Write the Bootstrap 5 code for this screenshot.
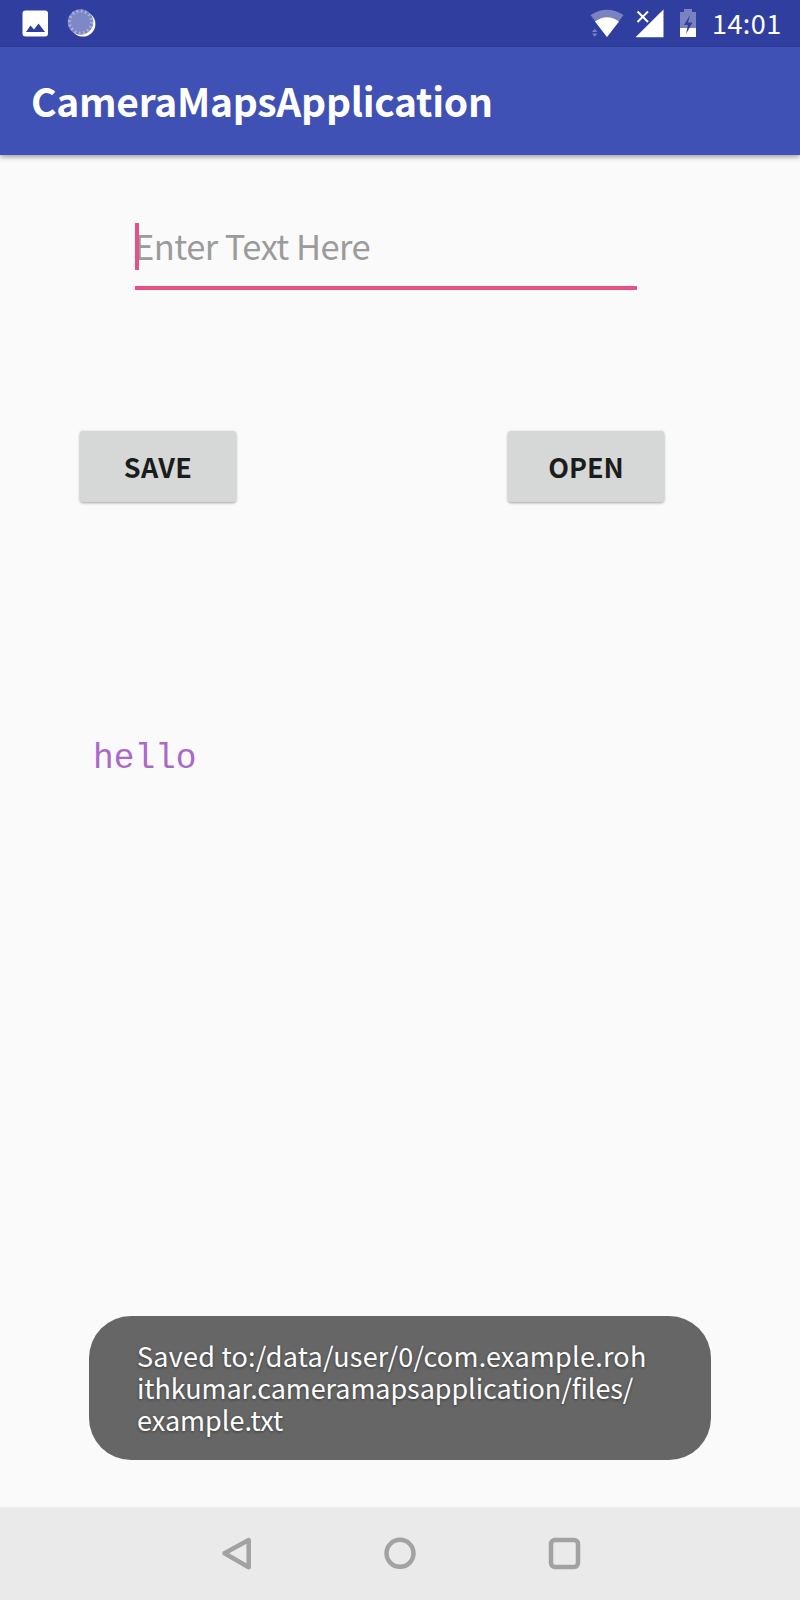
<!DOCTYPE html>
<html lang="en">
<head>
<meta charset="utf-8">
<meta name="viewport" content="width=device-width, initial-scale=1">
<title>CameraMapsApplication</title>
<link rel="stylesheet" href="https://cdn.jsdelivr.net/npm/bootstrap@5.3.0/dist/css/bootstrap.min.css">
<style>
  body { background: #fafafa; font-family: "Noto Sans CJK SC", "Noto Sans", sans-serif; }
  .screen { width: 800px; height: 1600px; }
  .status-bar { height: 47px; background: #303f9f; }
  .status-bar svg { display: block; }
  .clock { width: 88px; font-size: 27px; line-height: 45px; letter-spacing: .45px; }
  .app-bar { height: 108px; padding: 0 31px 2px; background: #3f51b5; box-shadow: 0 2px 5px rgba(0,0,0,.38); z-index: 1; }
  .app-title { font-size: 39px; line-height: 52px; font-weight: 700; letter-spacing: -.29px; }
  .text-field { width: 502px; height: 67px; margin: 68px 0 0 135px; border-bottom: 4px solid #e84f86; }
  .hint { font-size: 34.5px; line-height: 45px; letter-spacing: -.55px; margin-left: -1px; color: #9b9b9b; }
  .caret { width: 4px; height: 47px; left: 0; top: 0; background: #e84f86; }
  .actions { margin: 141px 0 0 80px; width: 584px; }
  .app-btn { --bs-btn-padding-x: 0; --bs-btn-padding-y: 0; --bs-btn-border-width: 0; --bs-btn-border-radius: 3px; --bs-btn-bg: #d6d8d7; --bs-btn-color: #1b1c1c;
    width: 156px; height: 71px; font-size: 27px; line-height: 71px; font-weight: 700; box-shadow: 0 1px 3px rgba(0,0,0,.36); }
  .btn-save { letter-spacing: .4px; }
  .output { font-family: "Liberation Mono", monospace; font-size: 34.5px; line-height: 46px; color: #ab68c8; margin: 234px 0 0 93px; }
  .message { width: 622px; height: 144px; border-radius: 42px; background: #666; color: #fff; padding: 24px 48px; font-size: 27px; line-height: 32px; text-shadow: 0 1px 3px rgba(0,0,0,.45); margin-bottom: 47px; }
  .line-a { letter-spacing: .24px; }
  .line-b { letter-spacing: -.08px; font-variant-ligatures: common-ligatures; }
  .nav-keys { height: 93px; background: #eaeaea; }
</style>
</head>
<body>
<div class="screen d-flex flex-column overflow-hidden">
  <header class="status-bar d-flex text-white">
    <svg width="120" height="47" viewBox="0 0 120 47">
      <rect x="22.5" y="10.500" width="25.5" height="26" rx="3" fill="#fff"/>
      <path d="M26 32l4.500-6.500 3.500 4 4.500-6L45 32z" fill="#303f9f"/>
      <circle cx="82.800" cy="24" r="12.600" fill="#fff"/>
      <circle cx="80.500" cy="22" r="12.800" fill="#7e88c6"/>
      <circle cx="80.500" cy="22" r="11" fill="none" stroke="#aeb5dc" stroke-width="3" stroke-dasharray="1.500 2.820"/>
    </svg>
    <div class="ms-auto d-flex">
      <svg width="142" height="47" viewBox="570 0 142 47">
        <path d="M590.500 15Q607 4.500 623.500 15L607 37z" fill="#7983c1"/>
        <path d="M595 21.500Q607 13 619 21.500L607 37z" fill="#fff"/>
        <path d="M592 32l2.700-3.200 2.700 3.200zM592 33.500l2.700 3.200 2.700-3.200z" fill="#7983c1"/>
        <path d="M663.500 9.500V37.300H635.500z" fill="#fff"/>
        <path d="M637.500 11.500l10.500 10.500M648 11.500L637.500 22" stroke="#fff" stroke-width="2"/>
        <path d="M684 9h8v3h4v16h-16V12h4z" fill="#7983c1"/>
        <path d="M680 28h16v9h-16z" fill="#fff"/>
        <path d="M690 15l-6 10h4l-2 9 6.500-11.500H688z" fill="#303f9f"/>
      </svg>
      <span class="clock">14:01</span>
    </div>
  </header>
  <nav class="app-bar navbar position-relative flex-shrink-0">
    <span class="app-title text-white">CameraMapsApplication</span>
  </nav>
  <main class="flex-grow-1 d-flex flex-column">
    <div class="text-field position-relative">
      <div class="hint">Enter Text Here</div>
      <span class="caret position-absolute"></span>
    </div>
    <div class="actions d-flex justify-content-between">
      <button type="button" class="btn app-btn btn-save">SAVE</button>
      <button type="button" class="btn app-btn">OPEN</button>
    </div>
    <div class="output">hello</div>
    <div class="message mt-auto mx-auto" role="status">
      <div class="line-a text-nowrap">Saved to:/data/user/0/com.example.roh</div>
      <div class="line-b text-nowrap">ithkumar.cameramapsapplication/files/</div>
      <div class="text-nowrap">example.txt</div>
    </div>
  </main>
  <footer class="nav-keys flex-shrink-0">
    <svg class="d-block" width="800" height="93" viewBox="0 1507 800 93" fill="none" stroke="#a2a2a2" stroke-width="4.500" stroke-linejoin="round">
      <path d="M248.700 1540v27.200L224.500 1553.300z"/>
      <circle cx="400" cy="1553.300" r="13.500"/>
      <rect x="551" y="1540" width="27" height="27" rx="4"/>
    </svg>
  </footer>
</div>
<script src="https://cdn.jsdelivr.net/npm/bootstrap@5.3.0/dist/js/bootstrap.bundle.min.js"></script>
</body>
</html>
